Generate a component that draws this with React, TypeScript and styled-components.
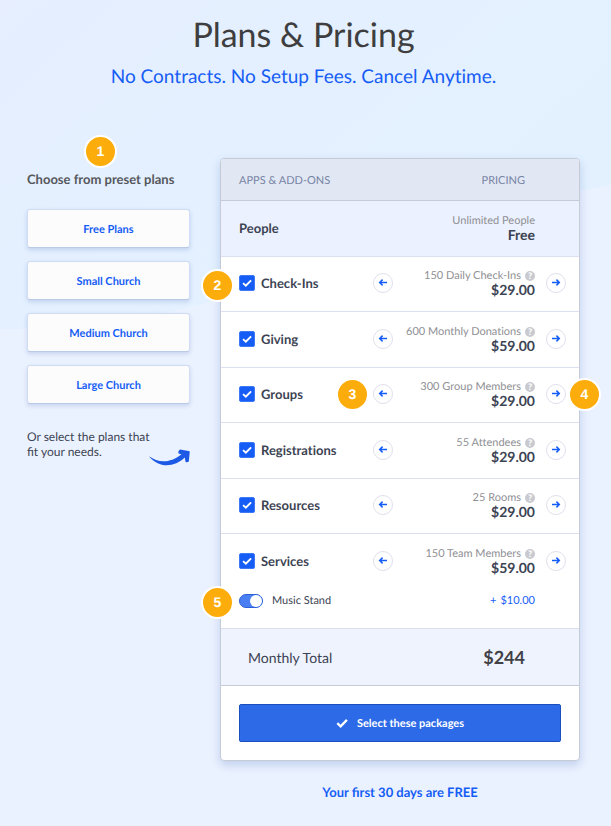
import React, { useState } from "react";
import styled, { createGlobalStyle } from "styled-components";

const colors = {
  blue: "#165df5",
  ink: "#3c4353",
  muted: "#8f8f94",
  line: "#dce0ee",
  edge: "#c6cbd8",
  badge: "#fdad0b",
};

const GlobalStyle = createGlobalStyle`
  *, *::before, *::after { box-sizing: border-box; }
  body {
    margin: 0;
    background: #ebf2ff;
    color: ${colors.ink};
    font-family: Lato, "Open Sans", sans-serif;
    text-rendering: geometricPrecision;
  }
  button, input { font: inherit; margin: 0; text-rendering: inherit; }
`;

const Page = styled.main`
  position: relative;
  isolation: isolate;
  padding: 13px 31px 23px 27px;
`;

const Backdrop = styled.svg`
  position: absolute;
  inset: 0 0 auto;
  width: 100%;
  height: 332px;
  z-index: -1;
`;

const Intro = styled.header`
  text-align: center;
  margin-bottom: 68px;
`;

const Title = styled.h1`
  margin: 0;
  color: #3e3e40;
  font-size: 34px;
  font-weight: 400;
  line-height: 44px;
`;

const Subtitle = styled.p`
  margin: 7px 0 0;
  color: ${colors.blue};
  font-size: 19px;
  font-variant-ligatures: none;
  line-height: 26px;
`;

const Columns = styled.div`
  display: grid;
  grid-template-columns: 163px minmax(0, 1fr);
  column-gap: 30px;
  align-items: start;
`;

const Presets = styled.section`
  display: flex;
  flex-direction: column;
  gap: 13px;
  padding-top: 12px;
`;

const PresetHeading = styled.h2`
  position: relative;
  margin: 0 0 8px;
  color: #55575c;
  font-size: 13px;
  font-weight: 700;
  line-height: 18px;
  white-space: nowrap;
`;

const PresetButton = styled.button`
  height: 39px;
  padding: 1px 0 0;
  border: 1px solid #d0dcf3;
  border-bottom-color: #b9c9e6;
  border-radius: 3px;
  background: #fcfcfd;
  box-shadow: 0 2px 4px rgba(90, 125, 190, 0.25);
  color: ${colors.blue};
  font-size: 11px;
  font-weight: 700;
  cursor: pointer;
`;

const Hint = styled.div`
  display: flex;
  justify-content: space-between;
  margin-top: 12px;
  white-space: nowrap;
`;

const HintText = styled.p`
  margin: 0;
  font-size: 12px;
  line-height: 15px;
`;

const HintArrow = styled.svg`
  flex: none;
  width: 42px;
  height: 20px;
  margin: 19px 0 0 -30px;
`;

const Card = styled.section`
  border: 1px solid ${colors.edge};
  border-radius: 4px;
  background: #fff;
  box-shadow: 0 4px 10px rgba(80, 120, 190, 0.28);
`;

const PlanTable = styled.table`
  width: 100%;
  table-layout: fixed;
  border-collapse: separate;
  border-spacing: 0;
  th, td {
    padding: 0;
    text-align: left;
    font-weight: 400;
  }
`;

const Col = styled.col<{ $width?: number }>`
  width: ${(p) => (p.$width ? `${p.$width}px` : "auto")};
`;

const HeadRow = styled.tr`
  height: 42px;
  th {
    padding-top: 2px;
    border-bottom: 1px solid ${colors.edge};
    background: #e1e7f3;
    color: #7784a4;
    font-size: 11px;
  }
  th:first-child { border-radius: 3px 0 0 0; padding-left: 18px; }
  th:last-child { border-radius: 0 3px 0 0; padding-right: 54px; text-align: right; }
`;

const PlanRow = styled.tr<{ $tinted?: boolean; $open?: boolean }>`
  height: 55px;
  &:nth-child(odd) { height: 56px; }
  th, td {
    padding-bottom: 2px;
    border-bottom: ${(p) => (p.$open ? "0" : `1px solid ${colors.line}`)};
    background: ${(p) => (p.$tinted ? "#ebf1fe" : "transparent")};
  }
`;

const NameCell = styled.th`
  && { position: relative; padding-left: 18px; }
`;

const StepCell = styled.td`
  position: relative;
`;

const PriceCell = styled.td`
  && { text-align: right; }
`;

const PlanName = styled.span`
  font-size: 13px;
  font-weight: 700;
  font-variant-ligatures: none;
`;

const CheckLabel = styled.label`
  display: flex;
  align-items: center;
  gap: 6px;
  cursor: pointer;
`;

const CheckBox = styled.span`
  display: grid;
  width: 16px;
  height: 16px;
  place-items: center;
  > * { grid-area: 1 / 1; }
  svg { pointer-events: none; }
`;

const CheckInput = styled.input`
  appearance: none;
  width: 16px;
  height: 16px;
  border: 1px solid #3d78f6;
  border-radius: 2px;
  background: #fff;
  &:checked { background: ${colors.blue}; }
`;

const StepButton = styled.button`
  display: grid;
  place-items: center;
  width: 20px;
  height: 20px;
  padding: 0;
  border: 1px solid #dfe0ed;
  border-radius: 50%;
  background: #fff;
  cursor: pointer;
`;

const Quantity = styled.div`
  display: flex;
  align-items: center;
  justify-content: flex-end;
  gap: 4px;
  color: ${colors.muted};
  font-size: 11px;
  font-variant-ligatures: none;
  line-height: 14px;
  white-space: nowrap;
`;

const Help = styled.button`
  flex: none;
  width: 10px;
  height: 10px;
  padding: 0;
  border: 0;
  border-radius: 50%;
  background: #c9cad0;
  color: #fff;
  font-size: 9px;
  font-weight: 900;
  line-height: 10px;
`;

const Price = styled.div`
  font-size: 14px;
  font-weight: 700;
  line-height: 14px;
`;

const AddOnRow = styled.tr`
  height: 38px;
  th, td {
    padding-bottom: 16px;
    vertical-align: middle;
  }
`;

const AddOnLabel = styled.label`
  display: flex;
  align-items: center;
  gap: 9px;
  font-size: 11px;
  line-height: 14px;
  cursor: pointer;
`;

const Toggle = styled.input`
  appearance: none;
  display: flex;
  justify-content: flex-start;
  width: 24px;
  height: 14px;
  border: 1px solid #2a60d8;
  border-radius: 7px;
  background: #c4cbdb;
  &::before {
    content: "";
    width: 12px;
    height: 12px;
    border-radius: 50%;
    background: #fff;
  }
  &:checked {
    justify-content: flex-end;
    background: #4a7ff3;
  }
`;

const AddOnPrice = styled.div`
  color: ${colors.blue};
  font-size: 11px;
  line-height: 14px;
`;

const Plus = styled.span`
  margin-right: 4px;
`;

const TotalRow = styled.tr`
  height: 58px;
  th, td {
    border-top: 1px solid ${colors.line};
    border-bottom: 1px solid ${colors.edge};
    background: #eff3fe;
  }
  th { padding-left: 27px; font-size: 14px; }
  td {
    padding-right: 54px;
    color: #414146;
    font-size: 18px;
    font-weight: 700;
    text-align: right;
  }
`;

const CardFooter = styled.footer`
  padding: 18px;
`;

const SubmitButton = styled.button`
  display: flex;
  align-items: center;
  justify-content: center;
  gap: 9px;
  width: 100%;
  height: 38px;
  border: 1px solid #1b4fbf;
  border-radius: 2px;
  background: #2d6ae8;
  color: #fff;
  font-size: 11px;
  font-weight: 700;
  cursor: pointer;
`;

const TrialNote = styled.p`
  margin: 22px 0 0;
  color: ${colors.blue};
  font-size: 13px;
  font-weight: 700;
  line-height: 18px;
  text-align: center;
`;

const badgePlaces = {
  heading: "left: 57px; top: -35px;",
  row: "left: -20px; top: 50%; margin-top: -15px;",
  addOn: "left: -20px; top: -4px;",
  before: "left: -37px; top: 50%; margin-top: -17px;",
  after: "left: 22px; top: 50%; margin-top: -17px;",
};

const Badge = styled.span<{ $place: keyof typeof badgePlaces }>`
  position: absolute;
  z-index: 1;
  ${(p) => badgePlaces[p.$place]}
  width: 33px;
  height: 33px;
  border: 2px solid #fff;
  border-radius: 50%;
  background: ${colors.badge};
  color: #fff;
  font-family: "Liberation Sans", Arial, sans-serif;
  font-size: 14px;
  font-weight: 700;
  line-height: 29px;
  text-align: center;
`;

const Tick = ({ size }: { size: number }) => (
  <svg width={size} height={size} viewBox="0 0 12 12" aria-hidden="true">
    <path d="M1.3 6.2 4.6 9.3 10.9 2.9" fill="none" stroke="#fff" strokeWidth="2.3" />
  </svg>
);

const Arrow = ({ back }: { back?: boolean }) => (
  <svg width="10" height="10" viewBox="0 0 10 10" aria-hidden="true">
    <path
      d={back ? "M9 4.5H1.8M4.6 1.6 1.7 4.5l2.9 2.9" : "M1 4.5h7.2M5.4 1.6l2.9 2.9-2.9 2.9"}
      fill="none"
      stroke={colors.blue}
      strokeWidth="1.5"
    />
  </svg>
);

type Plan = { name: string; quantity: string; price: string; badge?: string; stepBadges?: [string, string] };

const presets = ["Free Plans", "Small Church", "Medium Church", "Large Church"];

const plans: Plan[] = [
  { name: "Check-Ins", quantity: "150 Daily Check-Ins", price: "$29.00", badge: "2" },
  { name: "Giving", quantity: "600 Monthly Donations", price: "$59.00" },
  { name: "Groups", quantity: "300 Group Members", price: "$29.00", stepBadges: ["3", "4"] },
  { name: "Registrations", quantity: "55 Attendees", price: "$29.00" },
  { name: "Resources", quantity: "25 Rooms", price: "$29.00" },
  { name: "Services", quantity: "150 Team Members", price: "$59.00" },
];

function PlanLine({ plan, open }: { plan: Plan; open: boolean }) {
  const [checked, setChecked] = useState(true);
  return (
    <PlanRow $open={open}>
      <NameCell scope="row">
        {plan.badge && <Badge $place="row">{plan.badge}</Badge>}
        <CheckLabel>
          <CheckBox>
            <CheckInput type="checkbox" checked={checked} onChange={() => setChecked(!checked)} />
            {checked && <Tick size={10} />}
          </CheckBox>
          <PlanName>{plan.name}</PlanName>
        </CheckLabel>
      </NameCell>
      <StepCell>
        {plan.stepBadges && <Badge $place="before">{plan.stepBadges[0]}</Badge>}
        <StepButton type="button" aria-label={`Lower ${plan.name} tier`}>
          <Arrow back />
        </StepButton>
      </StepCell>
      <PriceCell>
        <Quantity>
          {plan.quantity}
          <Help type="button" aria-label={`About ${plan.name} pricing`}>?</Help>
        </Quantity>
        <Price>{plan.price}</Price>
      </PriceCell>
      <StepCell />
      <StepCell>
        <StepButton type="button" aria-label={`Raise ${plan.name} tier`}>
          <Arrow />
        </StepButton>
        {plan.stepBadges && <Badge $place="after">{plan.stepBadges[1]}</Badge>}
      </StepCell>
    </PlanRow>
  );
}

export default function App() {
  const [musicStand, setMusicStand] = useState(true);
  return (
    <>
      <GlobalStyle />
      <Page>
        <Backdrop viewBox="0 0 608 332" preserveAspectRatio="none" aria-hidden="true">
          <defs>
            <linearGradient id="sky" x1="0" y1="0" x2="1" y2="0.6">
              <stop offset="0" stopColor="#e6eeff" />
              <stop offset="0.4" stopColor="#e4f0ff" />
              <stop offset="1" stopColor="#e3f1ff" />
            </linearGradient>
          </defs>
          <path d="M0 0H608V185Q575 190 545 200L230 296Q110 332 0 329Z" fill="url(#sky)" />
        </Backdrop>
        <Intro>
          <Title>Plans &amp; Pricing</Title>
          <Subtitle>No Contracts. No Setup Fees. Cancel Anytime.</Subtitle>
        </Intro>
        <Columns>
          <Presets>
            <PresetHeading>
              <Badge $place="heading">1</Badge>
              Choose from preset plans
            </PresetHeading>
            {presets.map((name) => (
              <PresetButton key={name} type="button">{name}</PresetButton>
            ))}
            <Hint>
              <HintText>
                Or select the plans that
                <br />
                fit your needs.
              </HintText>
              <HintArrow viewBox="0 0 42 20" aria-hidden="true">
                <path
                  d="M1 8.2C10 14.5 21 16 33.5 6.2L31 5.7Q29.5 4.5 31 2.6L32 1.6 40.5 3Q42 3 41.7 4.5L40.8 13.5Q39 15 37.5 13.8L36.8 9.5C27 19 11 21 1 8.2Z"
                  fill="#1c5ae6"
                />
              </HintArrow>
            </Hint>
          </Presets>
          <div>
            <Card>
              <PlanTable>
                <colgroup>
                  <Col />
                  <Col $width={30} />
                  <Col $width={132} />
                  <Col $width={11} />
                  <Col $width={33} />
                </colgroup>
                <thead>
                  <HeadRow>
                    <th scope="col">APPS &amp; ADD-ONS</th>
                    <th scope="col" colSpan={4}>PRICING</th>
                  </HeadRow>
                </thead>
                <tbody>
                  <PlanRow $tinted>
                    <NameCell scope="row"><PlanName>People</PlanName></NameCell>
                    <PriceCell colSpan={2}>
                      <Quantity>Unlimited People</Quantity>
                      <Price>Free</Price>
                    </PriceCell>
                    <td colSpan={2} />
                  </PlanRow>
                  {plans.map((plan) => (
                    <PlanLine key={plan.name} plan={plan} open={plan.name === "Services"} />
                  ))}
                  <AddOnRow>
                    <NameCell scope="row">
                      <Badge $place="addOn">5</Badge>
                      <AddOnLabel>
                        <Toggle
                          type="checkbox"
                          role="switch"
                          checked={musicStand}
                          onChange={() => setMusicStand(!musicStand)}
                        />
                        Music Stand
                      </AddOnLabel>
                    </NameCell>
                    <PriceCell colSpan={2}>
                      <AddOnPrice><Plus>+</Plus>$10.00</AddOnPrice>
                    </PriceCell>
                    <td colSpan={2} />
                  </AddOnRow>
                </tbody>
                <tfoot>
                  <TotalRow>
                    <th scope="row">Monthly Total</th>
                    <td colSpan={4}>$244</td>
                  </TotalRow>
                </tfoot>
              </PlanTable>
              <CardFooter>
                <SubmitButton type="button">
                  <Tick size={12} />
                  Select these packages
                </SubmitButton>
              </CardFooter>
            </Card>
            <TrialNote>Your first 30 days are FREE</TrialNote>
          </div>
        </Columns>
      </Page>
    </>
  );
}
